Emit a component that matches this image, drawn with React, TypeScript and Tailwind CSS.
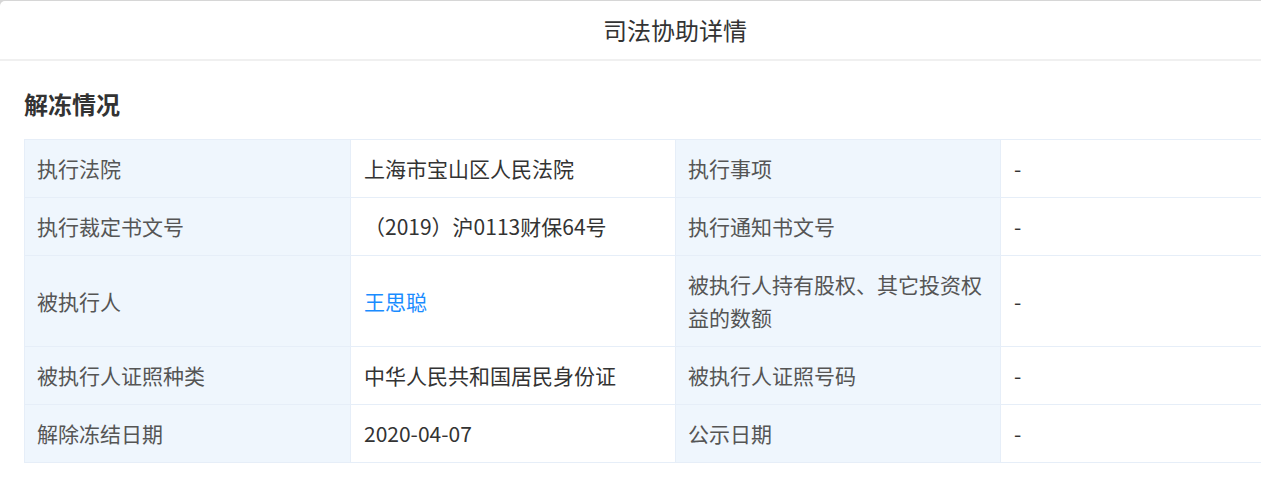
import React from 'react';

type Cell = { text: string; link?: boolean };
type Row = [string, Cell, string, Cell];

const rows: Row[] = [
  ['执行法院', { text: '上海市宝山区人民法院' }, '执行事项', { text: '-' }],
  ['执行裁定书文号', { text: '（2019）沪0113财保64号' }, '执行通知书文号', { text: '-' }],
  ['被执行人', { text: '王思聪', link: true }, '被执行人持有股权、其它投资权益的数额', { text: '-' }],
  ['被执行人证照种类', { text: '中华人民共和国居民身份证' }, '被执行人证照号码', { text: '-' }],
  ['解除冻结日期', { text: '2020-04-07' }, '公示日期', { text: '-' }],
];

const font = { fontFamily: '"Microsoft YaHei", "Noto Sans CJK SC", "Noto Sans", sans-serif' };

function Label({ children }: { children: React.ReactNode }) {
  return (
    <div className="flex items-center border-r border-b border-[#e6eef8] bg-[#eff6fd] py-3 pl-[12px] pr-3 text-[21px] leading-[33px] text-[#555]">
      {children}
    </div>
  );
}

function Value({ cell }: { cell: Cell }) {
  return (
    <div
      className={
        'flex items-center border-r border-b border-[#e6eef8] bg-white py-3 pl-[13px] pr-4 text-[21px] leading-[33px] ' +
        (cell.link ? 'text-[#1a8cff]' : 'text-[#333]')
      }
    >
      {cell.text}
    </div>
  );
}

export default function App() {
  return (
    <div className="h-[486px] w-full overflow-hidden bg-[#d6d6d6] pt-px" style={font}>
      <div className="h-[520px] w-[1350px] rounded-[5px] bg-white">
        {/* Header */}
        <div className="flex h-[60px] items-center justify-center border-b-2 border-[#f0f0f0] text-[24px] text-[#333]">
          司法协助详情
        </div>

        {/* Body */}
        <div className="px-6">
          <h2 className="mt-[25px] mb-[17px] h-[36px] text-[24px] font-bold leading-[36px] text-[#333]">解冻情况</h2>

          <div className="grid grid-cols-[326px_325px_325px_326px] border-t border-l border-[#e6eef8]">
            {rows.map((r, i) => (
              <React.Fragment key={i}>
                <Label>{r[0]}</Label>
                <Value cell={r[1]} />
                <Label>{r[2]}</Label>
                <Value cell={r[3]} />
              </React.Fragment>
            ))}
          </div>
        </div>
      </div>
    </div>
  );
}
